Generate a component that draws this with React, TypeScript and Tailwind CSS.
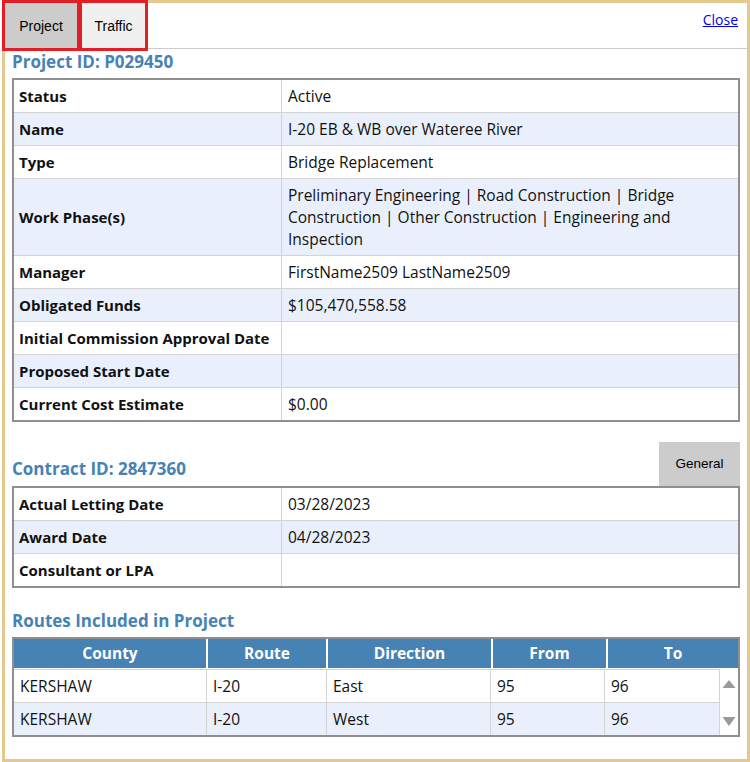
import React from "react";

type Row = { label: string; value: string };

const projectRows: Row[] = [
  { label: "Status", value: "Active" },
  { label: "Name", value: "I-20 EB & WB over Wateree River" },
  { label: "Type", value: "Bridge Replacement" },
  {
    label: "Work Phase(s)",
    value:
      "Preliminary Engineering | Road Construction | Bridge Construction | Other Construction | Engineering and Inspection",
  },
  { label: "Manager", value: "FirstName2509 LastName2509" },
  { label: "Obligated Funds", value: "$105,470,558.58" },
  { label: "Initial Commission Approval Date", value: "" },
  { label: "Proposed Start Date", value: "" },
  { label: "Current Cost Estimate", value: "$0.00" },
];

const contractRows: Row[] = [
  { label: "Actual Letting Date", value: "03/28/2023" },
  { label: "Award Date", value: "04/28/2023" },
  { label: "Consultant or LPA", value: "" },
];

const routes = [
  ["KERSHAW", "I-20", "East", "95", "96"],
  ["KERSHAW", "I-20", "West", "95", "96"],
];

function InfoTable({ rows }: { rows: Row[] }) {
  return (
    <div className="w-[728px] border-2 border-[#8f8f8f]">
      {rows.map((r, i) => (
        <div
          key={r.label}
          className={`flex border-b border-[#d4d4d4] last:border-b-0 ${
            i % 2 === 1 ? "bg-[#e9f0fc]" : "bg-white"
          }`}
        >
          <div className="flex w-[268px] shrink-0 items-center whitespace-nowrap border-r border-[#d4d4d4] px-[5px] py-[5px] text-[15px] font-bold leading-[22px]">
            {r.label}
          </div>
          <div className="min-h-[32px] flex-1 py-[5px] pl-[6px] pr-[6px] leading-[22px]">
            {r.value}
          </div>
        </div>
      ))}
    </div>
  );
}

export default function App() {
  const headW = ["w-[194px]", "w-[120px]", "w-[165px]", "w-[115px]", "w-[130px]"];
  const cellW = ["w-[193px]", "w-[120px]", "w-[164px]", "w-[114px]", "w-[115px]"];
  const heads = ["County", "Route", "Direction", "From", "To"];
  return (
    <div className="ml-[2px] flex h-[762px] w-[748px] flex-col border-[3px] border-[#e3c98d] bg-white font-['Open_Sans',sans-serif] text-[15.5px] text-[#111]">
      <div className="flex h-[46px] shrink-0 border-b border-[#cccccc]">
        <div className="-ml-[3px] -mt-[3px] flex h-[51px] shrink-0 font-['Liberation_Sans',Arial,sans-serif] text-[14px] text-black">
          <div className="flex h-[51px] w-[78px] items-center justify-center border-[3px] border-[#e31e24] bg-[#cccccc] pt-[1px]">
            Project
          </div>
          <div className="-ml-[1px] flex h-[51px] w-[69px] items-center justify-center border-[3px] border-[#e31e24] bg-[#f0f0f0] pt-[1px]">
            Traffic
          </div>
        </div>
        <a
          href="#"
          className="ml-auto mr-[9px] mt-[8px] h-[18px] text-[14px] leading-[18px] text-[#0000ee] underline"
        >
          Close
        </a>
      </div>

      <div className="flex flex-col px-[7px]">
        <div className="h-[29px] text-[17px] font-bold leading-[26px] text-[#4682b4]">
          Project ID: P029450
        </div>
        <InfoTable rows={projectRows} />

        <div className="mt-[20px] flex h-[44px] w-[728px] items-end justify-between">
          <div className="mb-[4px] text-[17px] font-bold leading-[26px] text-[#4682b4]">
            Contract ID: 2847360
          </div>
          <div className="flex h-[44px] w-[81px] items-center justify-center bg-[#cccccc] pt-[1px] font-['Liberation_Sans',Arial,sans-serif] text-[13.5px] text-black">
            General
          </div>
        </div>
        <InfoTable rows={contractRows} />

        <div className="mt-[20px] h-[26px] text-[17px] font-bold leading-[26px] text-[#4682b4]">
          Routes Included in Project
        </div>
        <div className="mt-[3px] w-[728px] border-2 border-[#8f8f8f]">
          <div className="flex h-[29px] bg-[#4682b4] font-bold text-white">
            {heads.map((h, i) => (
              <div
                key={h}
                className={`${headW[i]} flex items-center justify-center ${
                  i < 4 ? "border-r-2 border-white" : ""
                }`}
              >
                {h}
              </div>
            ))}
          </div>
          <div className="flex pt-[1px]">
            <div className="flex w-[706px] flex-col">
              {routes.map((r, ri) => (
                <div
                  key={ri}
                  className={`flex h-[33px] border-t border-[#d4d4d4] ${
                    ri % 2 === 1 ? "bg-[#e9f0fc]" : "bg-white"
                  }`}
                >
                  {r.map((c, ci) => (
                    <div
                      key={ci}
                      className={`${cellW[ci]} flex items-center border-r border-[#d4d4d4] px-[6px] pt-[2px]`}
                    >
                      {c}
                    </div>
                  ))}
                </div>
              ))}
            </div>
            <svg width="18" height="66" viewBox="0 0 18 66" className="shrink-0">
              <polygon points="2.5,19 15.5,19 9,11" fill="#9a9a9a" />
              <polygon points="2.5,48 15.5,48 9,57" fill="#9a9a9a" />
            </svg>
          </div>
        </div>
      </div>
    </div>
  );
}
